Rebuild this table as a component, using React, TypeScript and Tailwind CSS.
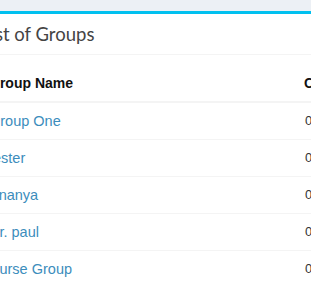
const groups = [
  { name: 'Group One', count: 0 },
  { name: 'tester', count: 0 },
  { name: 'Ananya', count: 0 },
  { name: 'Dr. paul', count: 0 },
  { name: 'Nurse Group', count: 0 },
];

export default function App() {
  return (
    <div className="h-[285px] w-[311px] overflow-hidden bg-[#ecf0f5] pt-[11px]">
      {/* box with info top border */}
      <div className="-ml-[29px] w-[420px] border-t-[3px] border-[#00c0ef] bg-white">
        <div className="border-b border-[#f4f4f4] p-[10px]">
          <h3 className="text-[18.5px] leading-[20px] text-[#444]" style={{ fontFamily: 'Lato, sans-serif' }}>
            List of Groups
          </h3>
        </div>
        <div className="p-[10px]" style={{ fontFamily: '"Liberation Sans", Arial, sans-serif' }}>
          <table className="w-full border-collapse text-[14px] leading-[20px] text-[#333]">
            <thead>
              <tr className="border-b-2 border-[#f4f4f4]">
                <th className="w-[316px] p-2 text-left font-bold text-[#111]">Group Name</th>
                <th className="p-2 pl-[7px] text-left font-bold text-[#111]">Count</th>
              </tr>
            </thead>
            <tbody>
              {groups.map((g) => (
                <tr key={g.name} className="border-t border-[#f4f4f4]">
                  <td className="p-2 pl-[8px]">
                    <a className="text-[14.5px] text-[#3c8dbc]">{g.name}</a>
                  </td>
                  <td className="p-2 text-[13px]">{g.count}</td>
                </tr>
              ))}
            </tbody>
          </table>
        </div>
      </div>
    </div>
  );
}
